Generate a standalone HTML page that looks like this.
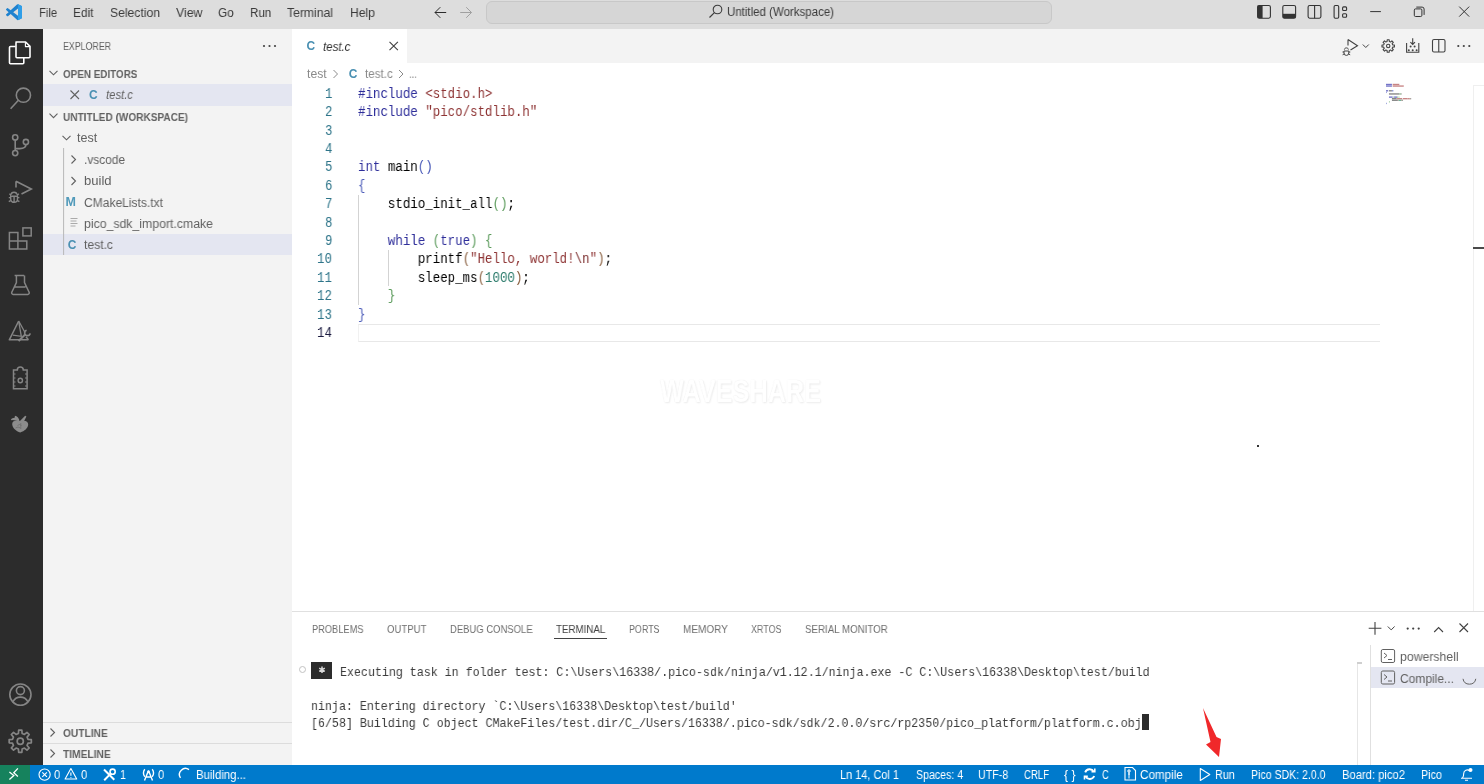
<!DOCTYPE html>
<html><head><meta charset="utf-8"><style>
*{margin:0;padding:0;box-sizing:border-box}
html,body{width:1484px;height:784px;overflow:hidden;background:#fff}
body{position:relative;font-family:"Liberation Sans",sans-serif;}
.r{position:absolute}
.t{position:absolute;white-space:pre;line-height:1;display:inline-block;will-change:transform}
.m{font-family:"Liberation Mono",monospace}
svg{position:absolute;overflow:visible}
</style></head><body>
<!-- title bar -->
<div class="r" style="left:0;top:0;width:1484px;height:29px;background:#dddddd"></div>
<!-- activity bar -->
<div class="r" style="left:0;top:29px;width:43px;height:736px;background:#2c2c2c"></div>
<!-- sidebar -->
<div class="r" style="left:43px;top:29px;width:249px;height:736px;background:#f3f3f3"></div>
<!-- editor tab bar -->
<div class="r" style="left:292px;top:29px;width:1192px;height:34px;background:#f3f3f3"></div>
<div class="r" style="left:292px;top:29px;width:115px;height:34px;background:#ffffff"></div>
<!-- panel border -->
<div class="r" style="left:292px;top:611px;width:1192px;height:1px;background:#e0e0e0"></div>
<!-- status bar -->
<div class="r" style="left:0;top:765px;width:1484px;height:19px;background:#007acc"></div>
<div class="r" style="left:0;top:765px;width:30px;height:19px;background:#16825d"></div>

<!-- menu -->
<div class="t" style="left: 39px; top: 5.69px; font-size: 13.4px; color: rgb(59, 59, 59); transform: scaleX(0.8342); transform-origin: left center;">File</div>
<div class="t" style="left: 73px; top: 5.69px; font-size: 13.4px; color: rgb(59, 59, 59); transform: scaleX(0.8883); transform-origin: left center;">Edit</div>
<div class="t" style="left: 110px; top: 5.69px; font-size: 13.4px; color: rgb(59, 59, 59); transform: scaleX(0.9075); transform-origin: left center;">Selection</div>
<div class="t" style="left: 175.5px; top: 5.69px; font-size: 13.4px; color: rgb(59, 59, 59); transform: scaleX(0.9202); transform-origin: left center;">View</div>
<div class="t" style="left: 218px; top: 5.69px; font-size: 13.4px; color: rgb(59, 59, 59); transform: scaleX(0.8727); transform-origin: left center;">Go</div>
<div class="t" style="left: 249.7px; top: 5.69px; font-size: 13.4px; color: rgb(59, 59, 59); transform: scaleX(0.8666); transform-origin: left center;">Run</div>
<div class="t" style="left: 287px; top: 5.69px; font-size: 13.4px; color: rgb(59, 59, 59); transform: scaleX(0.9089); transform-origin: left center;">Terminal</div>
<div class="t" style="left: 350px; top: 5.69px; font-size: 13.4px; color: rgb(59, 59, 59); transform: scaleX(0.9075); transform-origin: left center;">Help</div>

<!-- command center -->
<div class="r" style="left:486px;top:0.5px;width:566px;height:23px;background:#d6d6d6;border:1px solid #c8c8c8;border-radius:6px"></div>
<div class="t" style="left: 727px; top: 6px; font-size: 12px; color: rgb(59, 59, 59); transform: scaleX(0.9568); transform-origin: left center;">Untitled (Workspace)</div>

<!-- sidebar text -->
<div class="t" style="left: 63.4px; top: 41px; font-size: 11px; color: rgb(97, 97, 97); transform: scaleX(0.801); transform-origin: left center;">EXPLORER</div>
<div class="t" style="left: 63.4px; top: 69px; font-size: 11px; font-weight: bold; color: rgb(97, 97, 97); transform: scaleX(0.8971); transform-origin: left center;">OPEN EDITORS</div>
<div class="r" style="left:43px;top:84px;width:249px;height:22px;background:#e4e6f1"></div>
<div class="t" style="left: 106px; top: 89px; font-size: 12.5px; font-style: italic; color: rgb(97, 97, 97); transform: scaleX(0.9038); transform-origin: left center;">test.c</div>
<div class="t" style="left: 63.4px; top: 112px; font-size: 11px; font-weight: bold; color: rgb(97, 97, 97); transform: scaleX(0.9145); transform-origin: left center;">UNTITLED (WORKSPACE)</div>
<div class="t" style="left: 76.7px; top: 132px; font-size: 12.5px; color: rgb(97, 97, 97); transform: scaleX(0.9922); transform-origin: left center;">test</div>
<div class="t" style="left: 84px; top: 154px; font-size: 12.5px; color: rgb(97, 97, 97); transform: scaleX(0.9514); transform-origin: left center;">.vscode</div>
<div class="t" style="left: 84px; top: 175px; font-size: 12.5px; color: rgb(97, 97, 97); transform: scaleX(1.0446); transform-origin: left center;">build</div>
<div class="t" style="left: 84px; top: 197px; font-size: 12.5px; color: rgb(97, 97, 97); transform: scaleX(0.9638); transform-origin: left center;">CMakeLists.txt</div>
<div class="t" style="left: 84px; top: 218px; font-size: 12.5px; color: rgb(97, 97, 97); transform: scaleX(0.9824); transform-origin: left center;">pico_sdk_import.cmake</div>
<div class="r" style="left:43px;top:234px;width:249px;height:21px;background:#e4e6f1"></div>
<div class="t" style="left: 84px; top: 239px; font-size: 12.5px; color: rgb(97, 97, 97); transform: scaleX(0.9707); transform-origin: left center;">test.c</div>
<div class="r" style="left:43px;top:722px;width:249px;height:1px;background:#dcdcdc"></div>
<div class="r" style="left:43px;top:743px;width:249px;height:1px;background:#dcdcdc"></div>
<div class="t" style="left: 63.3px; top: 727.8px; font-size: 11px; font-weight: bold; color: rgb(97, 97, 97); transform: scaleX(0.9258); transform-origin: left center;">OUTLINE</div>
<div class="t" style="left: 63.3px; top: 748.8px; font-size: 11px; font-weight: bold; color: rgb(97, 97, 97); transform: scaleX(0.929); transform-origin: left center;">TIMELINE</div>


<!-- editor tab -->
<div class="t" style="left: 322.9px; top: 41px; font-size: 12.5px; font-style: italic; color: rgb(51, 51, 51); transform: scaleX(0.9172); transform-origin: left center;">test.c</div>
<!-- breadcrumbs -->
<div class="t" style="left: 307px; top: 68px; font-size: 12px; color: rgb(138, 138, 138); transform: scaleX(1.0184); transform-origin: left center;">test</div>
<div class="t" style="left: 365.4px; top: 68px; font-size: 12px; color: rgb(138, 138, 138); transform: scaleX(0.9691); transform-origin: left center;">test.c</div>
<div class="t" style="left: 409px; top: 68px; font-size: 12px; color: rgb(138, 138, 138); transform: scaleX(0.7988); transform-origin: left center;">...</div>
<!-- indent guides -->
<div class="r" style="left:358px;top:195px;width:1px;height:110px;background:#d3d3d3"></div>
<div class="r" style="left:387.5px;top:250px;width:1px;height:36px;background:#d3d3d3"></div>
<!-- current line box -->
<div class="r" style="left:358px;top:323.8px;width:1022px;height:18px;border-top:1.6px solid #e8e8e8;border-bottom:1.6px solid #e8e8e8;border-left:1px solid #f1f1f1"></div>
<div class="t m" style="left: 358px; top: 86.77px; font-size: 14px; transform: scaleX(0.889); transform-origin: left center;"><span style="color:#2e2e9a">#include</span><span style="color:#000000"> </span><span style="color:#8e3434">&lt;stdio.h&gt;</span></div>
<div class="t m" style="left: 324.53px; top: 86.77px; font-size: 14px; color: rgb(45, 116, 137); transform: scaleX(0.8886); transform-origin: left center;">1</div>
<div class="t m" style="left: 358px; top: 105.17px; font-size: 14px; transform: scaleX(0.889); transform-origin: left center;"><span style="color:#2e2e9a">#include</span><span style="color:#000000"> </span><span style="color:#8e3434">"pico/stdlib.h"</span></div>
<div class="t m" style="left: 324.53px; top: 105.17px; font-size: 14px; color: rgb(45, 116, 137); transform: scaleX(0.8886); transform-origin: left center;">2</div>
<div class="t m" style="left: 324.53px; top: 123.57px; font-size: 14px; color: rgb(45, 116, 137); transform: scaleX(0.8886); transform-origin: left center;">3</div>
<div class="t m" style="left: 324.53px; top: 141.97px; font-size: 14px; color: rgb(45, 116, 137); transform: scaleX(0.8886); transform-origin: left center;">4</div>
<div class="t m" style="left: 358px; top: 160.37px; font-size: 14px; transform: scaleX(0.8888); transform-origin: left center;"><span style="color:#2e2e9a">int</span><span style="color:#000000"> </span><span style="color:#000000">main</span><span style="color:#4a5ab8">()</span></div>
<div class="t m" style="left: 324.53px; top: 160.37px; font-size: 14px; color: rgb(45, 116, 137); transform: scaleX(0.8886); transform-origin: left center;">5</div>
<div class="t m" style="left: 358px; top: 178.77px; font-size: 14px; transform: scaleX(0.8886); transform-origin: left center;"><span style="color:#4a5ab8">{</span></div>
<div class="t m" style="left: 324.53px; top: 178.77px; font-size: 14px; color: rgb(45, 116, 137); transform: scaleX(0.8886); transform-origin: left center;">6</div>
<div class="t m" style="left: 358px; top: 197.17px; font-size: 14px; transform: scaleX(0.889); transform-origin: left center;"><span style="color:#000000">    stdio_init_all</span><span style="color:#5a9a5a">()</span><span style="color:#000000">;</span></div>
<div class="t m" style="left: 324.53px; top: 197.17px; font-size: 14px; color: rgb(45, 116, 137); transform: scaleX(0.8886); transform-origin: left center;">7</div>
<div class="t m" style="left: 324.53px; top: 215.57px; font-size: 14px; color: rgb(45, 116, 137); transform: scaleX(0.8886); transform-origin: left center;">8</div>
<div class="t m" style="left: 358px; top: 233.97px; font-size: 14px; transform: scaleX(0.8889); transform-origin: left center;"><span style="color:#000000">    </span><span style="color:#2e2e9a">while</span><span style="color:#000000"> </span><span style="color:#5a9a5a">(</span><span style="color:#2e2e9a">true</span><span style="color:#5a9a5a">)</span><span style="color:#000000"> </span><span style="color:#5a9a5a">{</span></div>
<div class="t m" style="left: 324.53px; top: 233.97px; font-size: 14px; color: rgb(45, 116, 137); transform: scaleX(0.8886); transform-origin: left center;">9</div>
<div class="t m" style="left: 358px; top: 252.37px; font-size: 14px; transform: scaleX(0.889); transform-origin: left center;"><span style="color:#000000">        printf</span><span style="color:#8a6040">(</span><span style="color:#8e3434">"Hello, world!</span><span style="color:#7a2a2a">\n</span><span style="color:#8e3434">"</span><span style="color:#8a6040">)</span><span style="color:#000000">;</span></div>
<div class="t m" style="left: 317.06px; top: 252.37px; font-size: 14px; color: rgb(45, 116, 137); transform: scaleX(0.8886); transform-origin: left center;">10</div>
<div class="t m" style="left: 358px; top: 270.77px; font-size: 14px; transform: scaleX(0.8891); transform-origin: left center;"><span style="color:#000000">        sleep_ms</span><span style="color:#8a6040">(</span><span style="color:#2a7a6a">1000</span><span style="color:#8a6040">)</span><span style="color:#000000">;</span></div>
<div class="t m" style="left: 317.06px; top: 270.77px; font-size: 14px; color: rgb(45, 116, 137); transform: scaleX(0.8886); transform-origin: left center;">11</div>
<div class="t m" style="left: 358px; top: 289.17px; font-size: 14px; transform: scaleX(0.889); transform-origin: left center;"><span style="color:#000000">    </span><span style="color:#5a9a5a">}</span></div>
<div class="t m" style="left: 317.06px; top: 289.17px; font-size: 14px; color: rgb(45, 116, 137); transform: scaleX(0.8886); transform-origin: left center;">12</div>
<div class="t m" style="left: 358px; top: 307.57px; font-size: 14px; transform: scaleX(0.8886); transform-origin: left center;"><span style="color:#4a5ab8">}</span></div>
<div class="t m" style="left: 317.06px; top: 307.57px; font-size: 14px; color: rgb(45, 116, 137); transform: scaleX(0.8886); transform-origin: left center;">13</div>
<div class="t m" style="left: 317.06px; top: 325.97px; font-size: 14px; color: rgb(27, 27, 64); transform: scaleX(0.8886); transform-origin: left center;">14</div>
<div class="r" style="left:1256.5px;top:444.5px;width:2px;height:2px;background:#333"></div>
<!-- scrollbar -->
<div class="r" style="left:1473px;top:84.5px;width:1px;height:526px;background:#efefef"></div><div class="r" style="left:1473px;top:84.5px;width:11px;height:1px;background:#efefef"></div>
<div class="r" style="left:1473.3px;top:247.4px;width:11px;height:2px;background:#4a4a4a"></div>
<!-- watermark -->
<div class="t" style="left: 660px; top: 376.2px; font-size: 30.5px; font-weight: bold; color: rgb(255, 255, 255); text-shadow: rgb(228, 228, 228) 0px 0px 1px, rgb(236, 236, 236) 1px 1px 2px; transform: scaleX(0.8285); transform-origin: left center;">WAVESHARE</div>

<!-- panel tabs -->
<div class="t" style="left: 311.5px; top: 624px; font-size: 11px; color: rgb(111, 111, 111); transform: scaleX(0.8423); transform-origin: left center;">PROBLEMS</div>
<div class="t" style="left: 386.7px; top: 624px; font-size: 11px; color: rgb(111, 111, 111); transform: scaleX(0.8732); transform-origin: left center;">OUTPUT</div>
<div class="t" style="left: 449.8px; top: 624px; font-size: 11px; color: rgb(111, 111, 111); transform: scaleX(0.8597); transform-origin: left center;">DEBUG CONSOLE</div>
<div class="t" style="left: 555.7px; top: 624px; font-size: 11px; color: rgb(66, 66, 66); transform: scaleX(0.8863); transform-origin: left center;">TERMINAL</div>
<div class="r" style="left:554px;top:638px;width:53px;height:1px;background:#424242"></div>
<div class="t" style="left: 628.8px; top: 624px; font-size: 11px; color: rgb(111, 111, 111); transform: scaleX(0.809); transform-origin: left center;">PORTS</div>
<div class="t" style="left: 683px; top: 624px; font-size: 11px; color: rgb(111, 111, 111); transform: scaleX(0.9085); transform-origin: left center;">MEMORY</div>
<div class="t" style="left: 750.8px; top: 624px; font-size: 11px; color: rgb(111, 111, 111); transform: scaleX(0.8133); transform-origin: left center;">XRTOS</div>
<div class="t" style="left: 805px; top: 624px; font-size: 11px; color: rgb(111, 111, 111); transform: scaleX(0.8853); transform-origin: left center;">SERIAL MONITOR</div>

<!-- terminal -->
<div class="r" style="left:311px;top:662px;width:21px;height:17px;background:#2c2c2c"></div>
<svg width="10" height="10" style="left:316.5px;top:664.5px"><path d="M5 1.5v6.4M2.2 3.1l5.6 3.2M7.8 3.1l-5.6 3.2" stroke="#d8d8d8" stroke-width="1.5"></path></svg>
<div class="r" style="left:299px;top:665.5px;width:7px;height:7px;border:1px solid #c2c2c2;border-radius:50%"></div>
<div class="t m" style="left: 339.5px; top: 666.23px; font-size: 13.4px; color: rgb(59, 59, 59); transform: scaleX(0.8686); transform-origin: left center;">Executing task in folder test: C:\Users\16338/.pico-sdk/ninja/v1.12.1/ninja.exe -C C:\Users\16338\Desktop\test/build</div>
<div class="t m" style="left: 311px; top: 700.2px; font-size: 13.4px; color: rgb(59, 59, 59); transform: scaleX(0.8686); transform-origin: left center;">ninja: Entering directory `C:\Users\16338\Desktop\test/build'</div>
<div class="t m" style="left: 311px; top: 717.2px; font-size: 13.4px; color: rgb(59, 59, 59); transform: scaleX(0.8686); transform-origin: left center;">[6/58] Building C object CMakeFiles/test.dir/C_/Users/16338/.pico-sdk/sdk/2.0.0/src/rp2350/pico_platform/platform.c.obj</div>
<div class="r" style="left:1142px;top:714px;width:7px;height:16px;background:#2c2c2c"></div>
<!-- terminal tabs list -->
<div class="r" style="left:1370px;top:645px;width:1px;height:120px;background:#e0e0e0"></div>
<div class="r" style="left:1357px;top:662px;width:1px;height:103px;background:#e6e6e6"></div>
<div class="r" style="left:1357px;top:662px;width:5px;height:2px;background:#cfcfcf"></div>
<div class="r" style="left:1371px;top:667px;width:113px;height:21px;background:#e4e6f1"></div>
<div class="t" style="left: 1399.7px; top: 650.8px; font-size: 12.5px; color: rgb(97, 97, 97); transform: scaleX(0.9805); transform-origin: left center;">powershell</div>
<div class="t" style="left: 1399.7px; top: 672.8px; font-size: 12.5px; color: rgb(97, 97, 97); transform: scaleX(0.9595); transform-origin: left center;">Compile...</div>

<!-- status bar text -->
<div class="t" style="left: 54.3px; top: 769px; font-size: 12px; color: rgb(255, 255, 255); transform: scaleX(0.9271); transform-origin: left center;">0</div>
<div class="t" style="left: 81px; top: 769px; font-size: 12px; color: rgb(255, 255, 255); transform: scaleX(0.9271); transform-origin: left center;">0</div>
<div class="t" style="left: 119.5px; top: 769px; font-size: 12px; color: rgb(255, 255, 255); transform: scaleX(0.8972); transform-origin: left center;">1</div>
<div class="t" style="left: 157.5px; top: 769px; font-size: 12px; color: rgb(255, 255, 255); transform: scaleX(0.9271); transform-origin: left center;">0</div>
<div class="t" style="left: 196px; top: 769px; font-size: 12px; color: rgb(255, 255, 255); transform: scaleX(0.9487); transform-origin: left center;">Building...</div>
<div class="t" style="left: 840px; top: 769px; font-size: 12px; color: rgb(255, 255, 255); transform: scaleX(0.9116); transform-origin: left center;">Ln 14, Col 1</div>
<div class="t" style="left: 915.6px; top: 769px; font-size: 12px; color: rgb(255, 255, 255); transform: scaleX(0.8843); transform-origin: left center;">Spaces: 4</div>
<div class="t" style="left: 978.3px; top: 769px; font-size: 12px; color: rgb(255, 255, 255); transform: scaleX(0.8912); transform-origin: left center;">UTF-8</div>
<div class="t" style="left: 1024px; top: 769px; font-size: 12px; color: rgb(255, 255, 255); transform: scaleX(0.7976); transform-origin: left center;">CRLF</div>
<div class="t" style="left: 1064px; top: 769px; font-size: 12px; color: rgb(255, 255, 255); transform: scaleX(1.0212); transform-origin: left center;">{ }</div>
<div class="t" style="left: 1102.4px; top: 769px; font-size: 12px; color: rgb(255, 255, 255); transform: scaleX(0.7841); transform-origin: left center;">C</div>
<div class="t" style="left: 1139.6px; top: 769px; font-size: 12px; color: rgb(255, 255, 255); transform: scaleX(0.9747); transform-origin: left center;">Compile</div>
<div class="t" style="left: 1215px; top: 769px; font-size: 12px; color: rgb(255, 255, 255); transform: scaleX(0.8994); transform-origin: left center;">Run</div>
<div class="t" style="left: 1251px; top: 769px; font-size: 12px; color: rgb(255, 255, 255); transform: scaleX(0.8794); transform-origin: left center;">Pico SDK: 2.0.0</div>
<div class="t" style="left: 1342px; top: 769px; font-size: 12px; color: rgb(255, 255, 255); transform: scaleX(0.9348); transform-origin: left center;">Board: pico2</div>
<div class="t" style="left: 1421px; top: 769px; font-size: 12px; color: rgb(255, 255, 255); transform: scaleX(0.891); transform-origin: left center;">Pico</div>


<!-- ICONS -->
<svg width="1484" height="784" style="left:0;top:0" fill="none">
<!-- vscode logo -->
<g transform="translate(6,4.2) scale(0.16)">
<path d="M96.46 10.8L75.86.87a6.23 6.23 0 0 0-7.1 1.2L29.35 38.04 12.19 25.01a4.16 4.16 0 0 0-5.32.24L1.37 30.26a4.16 4.16 0 0 0 0 6.16L16.25 50 1.37 63.58a4.16 4.16 0 0 0 0 6.16l5.5 5a4.16 4.16 0 0 0 5.32.24l17.16-13.03 39.41 35.97a6.23 6.23 0 0 0 7.1 1.2l20.6-9.92a6.25 6.25 0 0 0 3.54-5.63V16.43a6.25 6.25 0 0 0-3.54-5.63zM75 72.7L45.1 50 75 27.3z" fill="#1f82cf"></path>
<path d="M75 0v100l21.5-10.3a6 6 0 0 0 3.5-5.6V16a6 6 0 0 0-3.5-5.6z" fill="#2f9ee8"></path>
</g>
<!-- back / forward -->
<path d="M435 12.5h11.2M435 12.5l5.3-5.3M435 12.5l5.3 5.3" stroke="#2b2b2b" stroke-width="1"></path>
<path d="M471.5 12.5h-11.3M471.5 12.5l-5.3-5.3M471.5 12.5l-5.3 5.3" stroke="#a0a0a0" stroke-width="1"></path>
<!-- command center search -->
<circle cx="717.5" cy="9.5" r="4.3" stroke="#3b3b3b" stroke-width="1.1"></circle>
<path d="M714.4 12.6L709.5 17.5" stroke="#3b3b3b" stroke-width="1.2"></path>
<!-- layout icons -->
<rect x="1257.6" y="5.5" width="12.8" height="12.7" rx="1.6" stroke="#333" stroke-width="1.1"></rect>
<rect x="1257.6" y="5.5" width="5" height="12.7" fill="#333"></rect>
<rect x="1282.8" y="5.5" width="12.8" height="12.7" rx="1.6" stroke="#333" stroke-width="1.1"></rect>
<rect x="1282.8" y="13.8" width="12.8" height="4.4" fill="#333"></rect>
<rect x="1308.1" y="5.5" width="12.8" height="12.7" rx="1.6" stroke="#333" stroke-width="1.1"></rect>
<path d="M1314.6 5.5v12.7" stroke="#333" stroke-width="1.1"></path>
<rect x="1334.1" y="5.5" width="4.6" height="12.7" rx="1.2" stroke="#333" stroke-width="1.1"></rect>
<rect x="1342.6" y="6.9" width="4" height="3.6" rx="1" stroke="#333" stroke-width="1.1"></rect>
<rect x="1342.6" y="13.7" width="4" height="3.6" rx="1" stroke="#333" stroke-width="1.1"></rect>
<!-- window controls -->
<path d="M1370.2 11.6h10.7" stroke="#333" stroke-width="1"></path>
<rect x="1414.3" y="8.9" width="7.6" height="7.6" rx="1.2" stroke="#333" stroke-width="1"></rect>
<path d="M1416.3 7.1h5.8a2 2 0 0 1 2 2v5.8" stroke="#333" stroke-width="1"></path>
<path d="M1459.2 6.6l10 10M1469.2 6.6l-10 10" stroke="#333" stroke-width="1"></path>

<!-- activity bar -->
<g stroke="#ffffff" stroke-width="1.6" stroke-linejoin="round">
<path d="M15.5 46.5h-5a1 1 0 0 0-1 1v15.3a1 1 0 0 0 1 1h12.3a1 1 0 0 0 1-1v-5"></path>
<path d="M16 42h9.6l4.4 4.4v10.4a1 1 0 0 1-1 1h-12a1 1 0 0 1-1-1v-13.8a1 1 0 0 1 1-1z"></path>
<path d="M25.4 42.2v4.4h4.4" stroke-width="1.1"></path>
</g>
<g stroke="#858585" stroke-width="1.6">
<circle cx="23.4" cy="95.2" r="7.1"></circle>
<path d="M18.4 100.2L10.6 108.8"></path>
<circle cx="15.2" cy="137.4" r="2.6"></circle>
<circle cx="15.2" cy="153.1" r="2.6"></circle>
<circle cx="25.9" cy="142" r="2.6"></circle>
<path d="M15.2 140v10.5M25.9 144.6c0 3-2.5 4-6 4h-4.7"></path>
<path d="M16 181.2v6.2M16 181.2l15.3 7.8-9.8 5"></path>
<path d="M11.2 194.5c0-1.4 1-2.2 2.8-2.2s2.8.8 2.8 2.2M10.7 196.2h6.8v2.8a3.4 3.4 0 0 1-6.8 0zM8.8 197.6h1.9M17.5 197.6h1.9M8.8 201.7l2.2-1.3M19.4 201.7l-2.2-1.3M9.4 193.8l1.6 1.5M18.8 193.8l-1.6 1.5M14.1 196.2v6.2" stroke-width="1.4"></path>
<path d="M9.4 232.6h8.5v8.5h8.9v8h-17.4zM9.4 241.1h8.5v8" stroke-width="1.5"></path>
<rect x="22.9" y="227.9" width="8.3" height="8" stroke-width="1.5"></rect>
<path d="M16.4 275.6v7l-4.6 9.6a1.5 1.5 0 0 0 1.4 2.2h14.5a1.5 1.5 0 0 0 1.4-2.2l-4.6-9.6v-7M14.6 275.6h9.6M14.4 287h11.2" stroke-width="1.5"></path>
<path d="M18.7 321L9.3 339.8H28.4" stroke-width="1.5" stroke-linejoin="round"></path><path d="M18.7 321L25 332.5M18.7 321.5L21.3 336.3L12.8 335.2" stroke-width="1.3"></path>
<path d="M18.6 341l6.8-6.8" stroke-width="2"></path><path d="M26.6 330.2a2.8 2.8 0 1 0 3.6 3.2" stroke-width="1.6"></path><path d="M26 336.8l2.4 3" stroke-width="1.4"></path>
<path d="M13.5 370h3.8a3 3 0 0 1 6 0h3.8v18.8h-13.6z" stroke-width="1.5"></path>
<circle cx="20.3" cy="380.5" r="2.2" stroke-width="1.4"></circle>
<path d="M13.5 374h2M13.5 378h2M13.5 382h2M13.5 386h2M25 374h2M25 378h2M25 382h2M25 386h2" stroke-width="1"></path>
<circle cx="20.4" cy="694.6" r="10.6"></circle>
<circle cx="20.4" cy="690.6" r="4"></circle>
<path d="M12.8 702c1.6-3.2 4.3-4.9 7.6-4.9s6 1.7 7.6 4.9"></path>
</g>
<path d="M12.2 424.2C12 421.3 14.8 420.2 18.3 421L21.5 421C25 420 28.4 421.3 28.2 424.8C27.8 428.2 24.6 431.2 20.3 432.4C16 431.2 12.5 428 12.2 424.2Z" fill="#8c8c8c"></path>
<path d="M11.4 419.8C13.5 417.8 16.5 418 18.8 421.2M14.8 416.6C16.5 417 18 418.5 18.8 421M20.5 421.5L25.7 416.2L22.8 421.8" stroke="#8c8c8c" stroke-width="1.6" fill="#8c8c8c"></path>
<path d="M17.5 425.5l2 -1 2 1M15.5 428l2.5-1 2.5 1M20.8 423v6" stroke="#6a6a6a" stroke-width="0.7"></path>
<!-- gear -->
<path d="M18.39 733.48 L18.68 730.17 L21.84 730.17 L22.13 733.48 L24.44 734.44 L26.98 732.30 L29.22 734.54 L27.08 737.08 L28.04 739.39 L31.35 739.68 L31.35 742.84 L28.04 743.13 L27.08 745.44 L29.22 747.98 L26.98 750.22 L24.44 748.08 L22.13 749.04 L21.84 752.35 L18.68 752.35 L18.39 749.04 L16.08 748.08 L13.54 750.22 L11.30 747.98 L13.44 745.44 L12.48 743.13 L9.17 742.84 L9.17 739.68 L12.48 739.39 L13.44 737.08 L11.30 734.54 L13.54 732.30 L16.08 734.44Z" stroke="#858585" stroke-width="1.7" stroke-linejoin="round"></path>
<circle cx="20.26" cy="741.26" r="3.1" stroke="#858585" stroke-width="1.7"></circle>
<!-- sidebar icons -->
<g fill="#424242"><circle cx="264" cy="46" r="1.1"></circle><circle cx="269.5" cy="46" r="1.1"></circle><circle cx="275" cy="46" r="1.1"></circle></g>
<g stroke="#616161" stroke-width="1.1">
<path d="M49.5 70.8l4 4 4-4M49.5 113.6l4 4 4-4M62.5 135.8l4 4 4-4"></path>
<path d="M71.5 155.5l4 4-4 4M71.5 177l4 4-4 4M50.5 728.5l4 4-4 4M50.5 749.5l4 4-4 4"></path>
<path d="M70.5 90.5l8.5 8.5M79 90.5l-8.5 8.5"></path>
</g>
<path d="M63.6 148v107" stroke="#b8b8b8" stroke-width="1"></path>
<!-- C icons -->
<text x="89" y="99" font-family="Liberation Sans" font-weight="bold" font-size="12" fill="#4a90b2">C</text>
<text x="67.8" y="248.5" font-family="Liberation Sans" font-weight="bold" font-size="12" fill="#4a90b2">C</text>
<text x="306.4" y="50" font-family="Liberation Sans" font-weight="bold" font-size="12" fill="#4a90b2">C</text>
<text x="348.8" y="77.6" font-family="Liberation Sans" font-weight="bold" font-size="12" fill="#4a90b2">C</text>
<text x="65.6" y="206" font-family="Liberation Sans" font-weight="bold" font-size="12.5" fill="#519aba">M</text>
<path d="M70.5 218.5h7M70.5 221h6M70.5 223.5h7M70.5 226h5" stroke="#aaaaaa" stroke-width="1"></path>
<!-- tab close -->
<path d="M389.5 41.8l8.4 8.4M397.9 41.8l-8.4 8.4" stroke="#424242" stroke-width="1.1"></path>
<!-- breadcrumb chevrons -->
<path d="M333.5 70l4 4-4 4M399 70l4 4-4 4" stroke="#8a8a8a" stroke-width="1"></path>

<!-- editor actions -->
<g stroke="#424242" stroke-width="1.1">
<path d="M1348 39.5v6M1348 39.5l9.5 6.2-7 4.3"></path>
<path d="M1344.4 49.6c0-1 .8-1.7 2-1.7s2 .7 2 1.7M1344 51h4.8v2a2.4 2.4 0 0 1-4.8 0zM1342.5 52h1.5M1348.8 52h1.5M1342.6 54.8l1.6-.9M1350.2 54.8l-1.6-.9" stroke-width="1"></path>
<path d="M1362.8 44.5l3 3 3-3" stroke-width="1"></path>
<path d="M1387.09 41.54 L1387.21 39.78 L1389.19 39.78 L1389.31 41.54 L1390.57 42.06 L1391.90 40.90 L1393.30 42.30 L1392.14 43.63 L1392.66 44.89 L1394.42 45.01 L1394.42 46.99 L1392.66 47.11 L1392.14 48.37 L1393.30 49.70 L1391.90 51.10 L1390.57 49.94 L1389.31 50.46 L1389.19 52.22 L1387.21 52.22 L1387.09 50.46 L1385.83 49.94 L1384.50 51.10 L1383.10 49.70 L1384.26 48.37 L1383.74 47.11 L1381.98 46.99 L1381.98 45.01 L1383.74 44.89 L1384.26 43.63 L1383.10 42.30 L1384.50 40.90 L1385.83 42.06Z" stroke-linejoin="round"></path><circle cx="1388.2" cy="46" r="1.7"></circle>
<path d="M1406.6 43v9.2h12.2v-9.2M1412.7 38.2v6M1410.4 42.2l2.3 2.3 2.3-2.3"></path>
<rect x="1432.5" y="39.5" width="12.5" height="12.5" rx="1.5"></rect>
<path d="M1438.75 39.5v12.5"></path>
</g>
<g fill="#424242"><circle cx="1410.6" cy="46.6" r="1"></circle><circle cx="1414.6" cy="46.6" r="1"></circle><circle cx="1408.8" cy="50.2" r="1"></circle><circle cx="1412.7" cy="50.2" r="1"></circle><circle cx="1416.6" cy="50.2" r="1"></circle>
<circle cx="1458.3" cy="46" r="1.1"></circle><circle cx="1463.8" cy="46" r="1.1"></circle><circle cx="1469.3" cy="46" r="1.1"></circle></g>

<!-- minimap -->
<g opacity="0.7">
<rect x="1386.00" y="83.80" width="5.92" height="1.35" fill="#3a3ab0"></rect>
<rect x="1392.66" y="83.80" width="6.66" height="1.35" fill="#b05050"></rect>
<rect x="1386.00" y="85.38" width="5.92" height="1.35" fill="#3a3ab0"></rect>
<rect x="1392.66" y="85.38" width="11.10" height="1.35" fill="#b05050"></rect>
<rect x="1386.00" y="90.12" width="2.22" height="1.35" fill="#3a3ab0"></rect>
<rect x="1388.96" y="90.12" width="2.96" height="1.35" fill="#505050"></rect>
<rect x="1391.92" y="90.12" width="1.48" height="1.35" fill="#5060c0"></rect>
<rect x="1386.00" y="91.70" width="0.74" height="1.35" fill="#5060c0"></rect>
<rect x="1388.96" y="93.28" width="10.36" height="1.35" fill="#505050"></rect>
<rect x="1399.32" y="93.28" width="1.48" height="1.35" fill="#50a050"></rect>
<rect x="1400.80" y="93.28" width="0.74" height="1.35" fill="#505050"></rect>
<rect x="1388.96" y="96.44" width="3.70" height="1.35" fill="#3a3ab0"></rect>
<rect x="1393.40" y="96.44" width="0.74" height="1.35" fill="#50a050"></rect>
<rect x="1394.14" y="96.44" width="2.96" height="1.35" fill="#3a3ab0"></rect>
<rect x="1397.10" y="96.44" width="0.74" height="1.35" fill="#50a050"></rect>
<rect x="1398.58" y="96.44" width="0.74" height="1.35" fill="#50a050"></rect>
<rect x="1391.92" y="98.02" width="4.44" height="1.35" fill="#505050"></rect>
<rect x="1396.36" y="98.02" width="0.74" height="1.35" fill="#906040"></rect>
<rect x="1397.10" y="98.02" width="5.18" height="1.35" fill="#b05050"></rect>
<rect x="1403.02" y="98.02" width="4.44" height="1.35" fill="#b05050"></rect>
<rect x="1407.46" y="98.02" width="1.48" height="1.35" fill="#b05050"></rect>
<rect x="1408.94" y="98.02" width="0.74" height="1.35" fill="#b05050"></rect>
<rect x="1409.68" y="98.02" width="0.74" height="1.35" fill="#906040"></rect>
<rect x="1410.42" y="98.02" width="0.74" height="1.35" fill="#505050"></rect>
<rect x="1391.92" y="99.60" width="5.92" height="1.35" fill="#505050"></rect>
<rect x="1397.84" y="99.60" width="0.74" height="1.35" fill="#906040"></rect>
<rect x="1398.58" y="99.60" width="2.96" height="1.35" fill="#2a8a6a"></rect>
<rect x="1401.54" y="99.60" width="0.74" height="1.35" fill="#906040"></rect>
<rect x="1402.28" y="99.60" width="0.74" height="1.35" fill="#505050"></rect>
<rect x="1388.96" y="101.18" width="0.74" height="1.35" fill="#50a050"></rect>
<rect x="1386.00" y="102.76" width="0.74" height="1.35" fill="#5060c0"></rect>
</g>
<!-- panel actions -->
<g stroke="#424242" stroke-width="1.1">
<path d="M1375 622v12.7M1368.7 628.3h12.7"></path>
<path d="M1387.8 626.5l3.4 3.4 3.4-3.4" stroke-width="1"></path>
<path d="M1434.2 632l4.4-4.4 4.4 4.4"></path>
<path d="M1459.5 623.5l8.5 8.5M1468 623.5l-8.5 8.5"></path>
</g>
<g fill="#424242"><circle cx="1407.7" cy="628.6" r="1.1"></circle><circle cx="1413.2" cy="628.6" r="1.1"></circle><circle cx="1418.7" cy="628.6" r="1.1"></circle></g>
<!-- terminal list icons -->
<g stroke="#616161" stroke-width="1">
<rect x="1381.3" y="649.5" width="13.3" height="13" rx="1.5"></rect>
<path d="M1384 653l3 2.5-3 2.5M1388 659.5h4"></path>
<rect x="1381.3" y="671" width="13.3" height="13" rx="1.5"></rect>
<path d="M1384 674.5l3 2.5-3 2.5M1388 681h4"></path>
<path d="M1463 678.8a6.5 6.5 0 0 0 12.8 0"></path>
</g>

<!-- status bar icons -->
<g stroke="#ffffff" stroke-width="1.1">
<path d="M9.4 772.1l4.4 3.4-4.4 4M17.9 768.4l-4.1 4.4 4.1 3.7" stroke-width="1.3"></path>
<circle cx="44.6" cy="774.6" r="5.6"></circle>
<path d="M42.3 772.3l4.6 4.6M46.9 772.3l-4.6 4.6"></path>
<path d="M70.9 768.6l5.8 10.4h-11.6z" stroke-linejoin="round"></path>
<path d="M70.9 772.5v3.3M70.9 777v.8"></path>
<path d="M104 769.5l10.3 10.3" stroke-width="2"></path><path d="M104.2 780.2l5.8-5.8" stroke-width="2"></path><circle cx="112.6" cy="771.7" r="2.6" stroke-width="1.6"></circle><path d="M110.8 773.5l-1.6 1.6" stroke-width="2"></path>
<path d="M148.5 770.5l-4 10M148.5 770.5l4 10M145.8 777h5.4" stroke-width="1.4"></path><circle cx="148.5" cy="772" r="1.3" fill="#fff" stroke="none"></circle><path d="M144.8 769.2c-1.8 2-1.8 5.6 0 7.6M152.2 769.2c1.8 2 1.8 5.6 0 7.6" stroke-width="1.4"></path>
<path d="M180.5 777.8a6 6 0 0 1 8.5-8.2" stroke-width="1.4"></path>
<path d="M1085.2 772.3a4.8 4.8 0 0 1 8.6-.6M1094.2 776a4.8 4.8 0 0 1-8.6 .6" stroke-width="1.9"></path><path d="M1091.5 771.8h3.3v-3.3M1087.8 776.3h-3.3v3.3" stroke-width="1.6"></path>
<path d="M1125 767.5h7.5l3 3v9.5h-10.5z"></path>
<path d="M1128 770h2v2h-2zM1128 774h2M1129 772v6.5" stroke-width="1"></path>
<path d="M1200.3 768.5l9.5 6-9.5 6z" stroke-linejoin="round"></path>
<path d="M1462.5 778c1-1 1.2-2 1.2-4.5a3.5 3.5 0 0 1 6 -2.5M1461 778.3h11M1465 780.3h3"></path>
</g>
<circle cx="1470.5" cy="770" r="2" fill="#ffffff"></circle>
</svg>

<!-- red arrow -->
<svg width="1484" height="784" style="left:0;top:0"><polygon points="1203,708 1216.5,737 1221,739 1219,757 1206,744.5 1210.5,742" fill="#f0282a"></polygon></svg>


</body></html>
